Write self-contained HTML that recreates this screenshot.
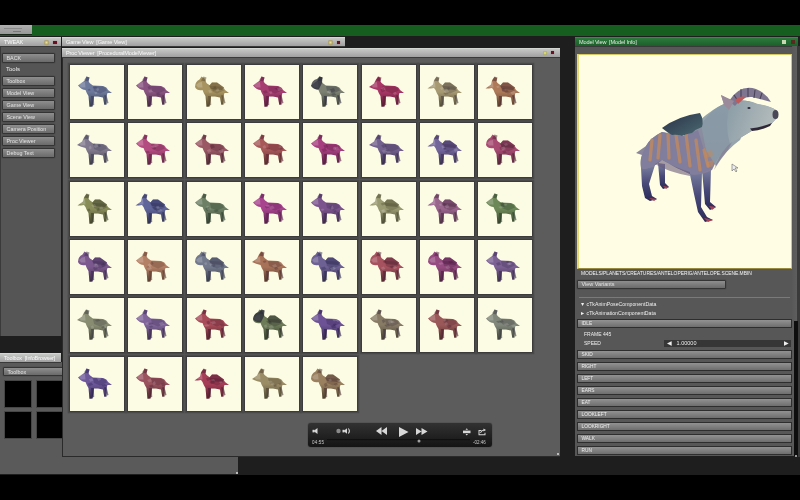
<!DOCTYPE html><html><head><meta charset="utf-8"><style>
*{margin:0;padding:0;box-sizing:border-box}
body{width:800px;height:500px;background:#000;position:relative;overflow:hidden;font-family:"Liberation Sans",sans-serif}
.tb,.btn,.ab,.t{will-change:transform}
.a{position:absolute}
.tb{position:absolute;height:10px;background:linear-gradient(#c6c8c6,#a0a0a0);border-top:1px solid #d4d6d4;border-bottom:1px solid #3a3a3a;color:#fafafa;font-size:5.6px;line-height:8.5px;padding-left:4px;white-space:nowrap;overflow:hidden;letter-spacing:-0.15px}
.btn{position:absolute;background:linear-gradient(#8e8e8e,#6a6a6a);border:1px solid #343434;border-radius:1px;color:#e4e4e4;font-size:5.4px;line-height:8.6px;padding-left:3.5px;white-space:nowrap;overflow:hidden;box-shadow:0 0 1px #222}
.cell{position:absolute;width:54px;height:54px;background:#fcfce4;box-shadow:0 0 0 0.8px #3a3a3a,0 0 0.5px 2.3px #4a4a4a}
.ab{position:absolute;left:577px;width:215px;height:9px;background:linear-gradient(#929292,#6e6e6e);border:1px solid #2e2e2e;color:#eee;font-size:4.8px;line-height:7px;padding-left:3.5px}
.t{position:absolute;color:#eee;font-size:5px;white-space:nowrap}
</style></head><body>

<svg width="0" height="0" style="position:absolute"><defs><linearGradient id="sh" gradientUnits="userSpaceOnUse" x1="0" y1="27" x2="0" y2="41"><stop offset="0" stop-color="#000" stop-opacity="0"/><stop offset="1" stop-color="#000" stop-opacity="0.5"/></linearGradient><path id="bA" d="M8,20.5 L12,17.5 L15,15.5 L16.5,11.5 L19.5,12.5 L18.5,16 Q19,18 23,20.5 L33,21 Q37,22 38,25 L42,28 L37.5,28 L36.5,31 L36.5,39.5 L34.3,39.8 L33,32.5 L28,31.5 L24,31.5 L22.5,41.5 L19.5,41.8 L18.5,31 Q16.5,28 15.5,25 Q12,25 8,20.5 Z"/><path id="bB" d="M7.5,23.5 L13,19.5 L14,15.5 L16.5,12 L19,13 L18.5,16.5 Q19,18 23,20.5 L33,21 Q37,22 38,25 L42,28 L37.5,28 L36.5,31 L36.5,39.5 L34.3,39.8 L33,32.5 L28,31.5 L24,31.5 L22.5,41.5 L19.5,41.8 L18.5,31 Q16.5,28 15.5,25 L14,23 Q11,23.5 7.5,23.5 Z"/><path id="bB2" d="M7,22 L12,18.5 L14,14.5 L16,11.5 L18.5,13 L18.5,16.5 Q19,18 23,20.5 L33,21 Q37,22 38,25 L42,28 L37.5,28 L36.5,31 L36.5,39.5 L34.3,39.8 L33,32.5 L28,31.5 L24,31.5 L22.5,41.5 L19.5,41.8 L18.5,31 Q16.5,28 15.5,25 Q11,24 7,22 Z"/><path id="bC" d="M8,22 Q8,16.5 12.5,14.5 L14.5,11.5 L17.5,13.5 L19,17 Q19,18 23,20.5 L33,21 Q37,22 38,25 L42,28 L37.5,28 L36.5,31 L36.5,39.5 L34.3,39.8 L33,32.5 L28,31.5 L24,31.5 L22.5,41.5 L19.5,41.8 L18.5,31 Q16.5,28 15.5,25 Q10,26 8,22 Z"/><path id="L" d="M21,31 L22,40.5 L24.2,40 L23.8,31Z M34,30.5 L37,38.5 L38.5,38 L36.5,30Z"/></defs></svg>
<div class="a" style="left:0;top:25px;width:800px;height:11px;background:#165e20"></div>
<div class="a" style="left:0;top:25px;width:32px;height:10px;background:linear-gradient(#b0b0b0,#989898);border-bottom:1px solid #1a2a1a"></div>
<div class="a" style="left:4px;top:27.5px;width:18px;height:0.8px;background:#8a8a8a"></div><div class="a" style="left:13px;top:30.5px;width:8px;height:0.8px;background:#7a7a7a"></div>
<div class="a" style="left:0;top:36px;width:800px;height:439px;background:#1e1e1e"></div>
<div class="a" style="left:0;top:46px;width:61px;height:290px;background:#555;border-left:1px solid #3a3a3a"></div>
<div class="tb" style="left:0;top:37px;width:61px">TWEAK</div>
<div class="a" style="left:44px;top:40px;width:4.5px;height:4.5px;border-radius:50%;background:radial-gradient(#e8e0a0,#8a7a40)"></div>
<div class="a" style="left:53px;top:40.5px;width:3.5px;height:3.5px;background:#6a1020;box-shadow:0 0 1px #a04050"></div>
<div class="btn" style="left:2px;top:53px;width:53px;height:10px">BACK</div>
<div class="t" style="left:6px;top:66px;font-size:6px">Tools</div>
<div class="btn" style="left:2px;top:76px;width:53px;height:10px">Toolbox</div>
<div class="btn" style="left:2px;top:88px;width:53px;height:10px">Model View</div>
<div class="btn" style="left:2px;top:100px;width:53px;height:10px">Game View</div>
<div class="btn" style="left:2px;top:112px;width:53px;height:10px">Scene View</div>
<div class="btn" style="left:2px;top:124px;width:53px;height:10px">Camera Position</div>
<div class="btn" style="left:2px;top:136px;width:53px;height:10px">Proc Viewer</div>
<div class="btn" style="left:2px;top:148px;width:53px;height:10px">Debug Text</div>
<div class="a" style="left:0;top:362px;width:238px;height:112px;background:#5a5a5a"></div>
<div class="tb" style="left:0;top:353px;width:61px;font-size:5.5px">Toolbox&nbsp; [InfoBrowser]</div>
<div class="btn" style="left:3px;top:367px;width:60px;height:9px">Toolbox</div>
<div class="a" style="left:3.5px;top:379.5px;width:28px;height:28px;background:#000;border:1px solid #464646"></div>
<div class="a" style="left:35.5px;top:379.5px;width:28px;height:28px;background:#000;border:1px solid #464646"></div>
<div class="a" style="left:3.5px;top:411px;width:28px;height:28px;background:#000;border:1px solid #464646"></div>
<div class="a" style="left:35.5px;top:411px;width:28px;height:28px;background:#000;border:1px solid #464646"></div>
<div class="tb" style="left:62px;top:37px;width:283px">Game View&nbsp; [Game View]</div>
<div class="a" style="left:328px;top:40px;width:4.5px;height:4.5px;border-radius:50%;background:radial-gradient(#e8e0a0,#8a7a40)"></div>
<div class="a" style="left:336.5px;top:40.5px;width:3.5px;height:3.5px;background:#6a1020;box-shadow:0 0 1px #a04050"></div>
<div class="a" style="left:62px;top:57px;width:498px;height:400px;background:#5c5c5c;border-left:1px solid #2a2a2a;border-bottom:1px solid #2a2a2a"></div>
<div class="tb" style="left:62px;top:48px;width:498px">Proc Viewer&nbsp; [ProceduralModelViewer]</div>
<div class="a" style="left:542.5px;top:50.5px;width:4.5px;height:4.5px;border-radius:50%;background:radial-gradient(#f0f090,#8a8a30)"></div>
<div class="a" style="left:550.5px;top:50.5px;width:3.5px;height:3.5px;background:#6a1020;box-shadow:0 0 1px #a04050"></div>
<div class="cell" style="left:70.0px;top:65.0px"><svg width="54" height="54" viewBox="0 0 54 54"><use href="#bA" fill="#6d799a"/><use href="#bA" fill="url(#sh)"/><path d="M23,21 L33,21.5 Q36,22.5 37,25.5 L30,28.5 L24,26Z" fill="#38385a" opacity="0.3"/><path d="M9,20 L12,17.5 L15,17 L15.5,22.5 L11,22.5Z" fill="#fff" opacity="0.2"/><path d="M14,15.5 L16.5,11.5 L19.5,12.5 L18.5,16.5Z" fill="#38385a" opacity="0.5"/><use href="#L" fill="#38385a" opacity="0.6"/><path d="M22.5,22.2 l3.3,-0.8 l1.7,1.6 l-3.3,0.8Z" fill="#38385a" opacity="0.35"/><path d="M26.1,23.9 l2.1,-1.1 l1.1,2.3 l-2.1,1.1Z" fill="#ffffff" opacity="0.15"/><path d="M17.6,24.5 l2.1,-0.8 l1.1,1.6 l-2.1,0.8Z" fill="#38385a" opacity="0.35"/><path d="M24.2,27.6 l2.2,-0.9 l1.1,1.8 l-2.2,0.9Z" fill="#ffffff" opacity="0.15"/></svg></div>
<div class="cell" style="left:128.3px;top:65.0px"><svg width="54" height="54" viewBox="0 0 54 54"><use href="#bA" fill="#885380"/><use href="#bA" fill="url(#sh)"/><path d="M23,21 L33,21.5 Q36,22.5 37,25.5 L30,28.5 L24,26Z" fill="#4a2a50" opacity="0.3"/><path d="M9,20 L12,17.5 L15,17 L15.5,22.5 L11,22.5Z" fill="#fff" opacity="0.2"/><path d="M14,15.5 L16.5,11.5 L19.5,12.5 L18.5,16.5Z" fill="#4a2a50" opacity="0.5"/><use href="#L" fill="#4a2a50" opacity="0.6"/><path d="M27.7,28.6 l3.2,-1.0 l1.6,2.1 l-3.2,1.0Z" fill="#4a2a50" opacity="0.35"/><path d="M33.6,21.4 l3.7,-1.0 l1.9,1.9 l-3.7,1.0Z" fill="#ffffff" opacity="0.15"/><path d="M19.5,21.9 l2.6,-1.4 l1.3,2.7 l-2.6,1.4Z" fill="#4a2a50" opacity="0.35"/><path d="M20.1,25.7 l3.3,-1.0 l1.6,2.1 l-3.3,1.0Z" fill="#ffffff" opacity="0.15"/></svg></div>
<div class="cell" style="left:186.6px;top:65.0px"><svg width="54" height="54" viewBox="0 0 54 54"><use href="#bC" fill="#a7935f"/><use href="#bC" fill="url(#sh)"/><path d="M22,21 L25,17.5 L30,17.5 L37,22.5 L35,25 L24,24Z" fill="#a7935f"/><path d="M22,21 L25,17.5 L30,17.5 L37,22.5 L35,25 L24,24Z" fill="#5a4a30" opacity="0.45"/><path d="M23,21 L33,21.5 Q36,22.5 37,25.5 L30,28.5 L24,26Z" fill="#5a4a30" opacity="0.3"/><path d="M9,20 L12,17.5 L15,17 L15.5,22.5 L11,22.5Z" fill="#fff" opacity="0.2"/><path d="M14,15.5 L16.5,11.5 L19.5,12.5 L18.5,16.5Z" fill="#5a4a30" opacity="0.5"/><use href="#L" fill="#5a4a30" opacity="0.6"/><path d="M26.3,21.5 l2.1,-0.9 l1.1,1.8 l-2.1,0.9Z" fill="#5a4a30" opacity="0.35"/><path d="M28.6,24.4 l2.6,-1.2 l1.3,2.4 l-2.6,1.2Z" fill="#ffffff" opacity="0.15"/><path d="M24.7,23.4 l3.6,-1.3 l1.8,2.5 l-3.6,1.3Z" fill="#5a4a30" opacity="0.35"/><path d="M21.1,25.6 l3.1,-1.4 l1.5,2.8 l-3.1,1.4Z" fill="#ffffff" opacity="0.15"/></svg></div>
<div class="cell" style="left:244.9px;top:65.0px"><svg width="54" height="54" viewBox="0 0 54 54"><use href="#bA" fill="#a73e72"/><use href="#bA" fill="url(#sh)"/><path d="M23,21 L33,21.5 Q36,22.5 37,25.5 L30,28.5 L24,26Z" fill="#5a1a40" opacity="0.3"/><path d="M9,20 L12,17.5 L15,17 L15.5,22.5 L11,22.5Z" fill="#fff" opacity="0.2"/><path d="M14,15.5 L16.5,11.5 L19.5,12.5 L18.5,16.5Z" fill="#5a1a40" opacity="0.5"/><use href="#L" fill="#5a1a40" opacity="0.6"/><path d="M29.4,23.3 l4.0,-0.8 l2.0,1.7 l-4.0,0.8Z" fill="#5a1a40" opacity="0.35"/><path d="M24.1,27.1 l2.3,-1.1 l1.2,2.2 l-2.3,1.1Z" fill="#ffffff" opacity="0.15"/><path d="M17.7,26.3 l3.5,-1.2 l1.8,2.4 l-3.5,1.2Z" fill="#5a1a40" opacity="0.35"/><path d="M31.9,23.5 l3.4,-1.2 l1.7,2.4 l-3.4,1.2Z" fill="#ffffff" opacity="0.15"/></svg></div>
<div class="cell" style="left:303.2px;top:65.0px"><svg width="54" height="54" viewBox="0 0 54 54"><use href="#bA" fill="#7b8072"/><use href="#bA" fill="url(#sh)"/><path d="M23,21 L33,21.5 Q36,22.5 37,25.5 L30,28.5 L24,26Z" fill="#2a2a3a" opacity="0.3"/><path d="M9,20 L12,17.5 L15,17 L15.5,22.5 L11,22.5Z" fill="#fff" opacity="0.2"/><path d="M14,15.5 L16.5,11.5 L19.5,12.5 L18.5,16.5Z" fill="#2a2a3a" opacity="0.5"/><use href="#L" fill="#2a2a3a" opacity="0.6"/><path d="M26.9,24.6 l3.7,-1.5 l1.8,2.9 l-3.7,1.5Z" fill="#2a2a3a" opacity="0.35"/><path d="M25.1,26.3 l2.1,-1.3 l1.1,2.6 l-2.1,1.3Z" fill="#ffffff" opacity="0.15"/><path d="M28.0,28.9 l3.6,-1.0 l1.8,1.9 l-3.6,1.0Z" fill="#2a2a3a" opacity="0.35"/><path d="M23.6,26.3 l2.0,-1.1 l1.0,2.2 l-2.0,1.1Z" fill="#ffffff" opacity="0.15"/><path d="M8,21 Q9,15 14,14 L16.5,11.5 L19.5,12.5 L19,18 L16,24 Q11,25 8,21Z" fill="#2a2a38" opacity="0.75"/></svg></div>
<div class="cell" style="left:361.5px;top:65.0px"><svg width="54" height="54" viewBox="0 0 54 54"><use href="#bB2" fill="#a73765"/><use href="#bB2" fill="url(#sh)"/><path d="M23,21 L33,21.5 Q36,22.5 37,25.5 L30,28.5 L24,26Z" fill="#5a1a30" opacity="0.3"/><path d="M9,20 L12,17.5 L15,17 L15.5,22.5 L11,22.5Z" fill="#fff" opacity="0.2"/><path d="M14,15.5 L16.5,11.5 L19.5,12.5 L18.5,16.5Z" fill="#5a1a30" opacity="0.5"/><use href="#L" fill="#5a1a30" opacity="0.6"/><path d="M19.9,21.9 l2.1,-1.3 l1.1,2.7 l-2.1,1.3Z" fill="#5a1a30" opacity="0.35"/><path d="M19.2,23.0 l2.8,-1.4 l1.4,2.8 l-2.8,1.4Z" fill="#ffffff" opacity="0.15"/><path d="M18.4,24.6 l3.1,-1.4 l1.5,2.8 l-3.1,1.4Z" fill="#5a1a30" opacity="0.35"/><path d="M30.9,27.9 l2.6,-1.1 l1.3,2.1 l-2.6,1.1Z" fill="#ffffff" opacity="0.15"/></svg></div>
<div class="cell" style="left:419.8px;top:65.0px"><svg width="54" height="54" viewBox="0 0 54 54"><use href="#bB" fill="#a79a72"/><use href="#bB" fill="url(#sh)"/><path d="M22,21 L25,17.5 L30,17.5 L37,22.5 L35,25 L24,24Z" fill="#a79a72"/><path d="M22,21 L25,17.5 L30,17.5 L37,22.5 L35,25 L24,24Z" fill="#4a4040" opacity="0.45"/><path d="M23,21 L33,21.5 Q36,22.5 37,25.5 L30,28.5 L24,26Z" fill="#4a4040" opacity="0.3"/><path d="M9,20 L12,17.5 L15,17 L15.5,22.5 L11,22.5Z" fill="#fff" opacity="0.2"/><path d="M14,15.5 L16.5,11.5 L19.5,12.5 L18.5,16.5Z" fill="#4a4040" opacity="0.5"/><use href="#L" fill="#4a4040" opacity="0.6"/><path d="M23.1,28.1 l3.9,-0.9 l2.0,1.7 l-3.9,0.9Z" fill="#4a4040" opacity="0.35"/><path d="M20.0,22.9 l2.5,-1.1 l1.2,2.2 l-2.5,1.1Z" fill="#ffffff" opacity="0.15"/><path d="M27.0,23.1 l2.0,-1.1 l1.0,2.1 l-2.0,1.1Z" fill="#4a4040" opacity="0.35"/><path d="M23.3,25.5 l3.9,-1.3 l2.0,2.5 l-3.9,1.3Z" fill="#ffffff" opacity="0.15"/></svg></div>
<div class="cell" style="left:478.1px;top:65.0px"><svg width="54" height="54" viewBox="0 0 54 54"><use href="#bB" fill="#ad7958"/><use href="#bB" fill="url(#sh)"/><path d="M22,21 L25,17.5 L30,17.5 L37,22.5 L35,25 L24,24Z" fill="#ad7958"/><path d="M22,21 L25,17.5 L30,17.5 L37,22.5 L35,25 L24,24Z" fill="#4a2a30" opacity="0.45"/><path d="M23,21 L33,21.5 Q36,22.5 37,25.5 L30,28.5 L24,26Z" fill="#4a2a30" opacity="0.3"/><path d="M9,20 L12,17.5 L15,17 L15.5,22.5 L11,22.5Z" fill="#fff" opacity="0.2"/><path d="M14,15.5 L16.5,11.5 L19.5,12.5 L18.5,16.5Z" fill="#4a2a30" opacity="0.5"/><use href="#L" fill="#4a2a30" opacity="0.6"/><path d="M25.8,25.9 l3.4,-0.8 l1.7,1.6 l-3.4,0.8Z" fill="#4a2a30" opacity="0.35"/><path d="M32.3,27.2 l3.7,-1.3 l1.9,2.7 l-3.7,1.3Z" fill="#ffffff" opacity="0.15"/><path d="M23.7,24.2 l2.2,-1.2 l1.1,2.5 l-2.2,1.2Z" fill="#4a2a30" opacity="0.35"/><path d="M18.1,21.5 l2.4,-0.9 l1.2,1.7 l-2.4,0.9Z" fill="#ffffff" opacity="0.15"/></svg></div>
<div class="cell" style="left:70.0px;top:123.3px"><svg width="54" height="54" viewBox="0 0 54 54"><use href="#bB2" fill="#80798d"/><use href="#bB2" fill="url(#sh)"/><path d="M23,21 L33,21.5 Q36,22.5 37,25.5 L30,28.5 L24,26Z" fill="#3a3a50" opacity="0.3"/><path d="M9,20 L12,17.5 L15,17 L15.5,22.5 L11,22.5Z" fill="#fff" opacity="0.2"/><path d="M14,15.5 L16.5,11.5 L19.5,12.5 L18.5,16.5Z" fill="#3a3a50" opacity="0.5"/><use href="#L" fill="#3a3a50" opacity="0.6"/><path d="M22.8,21.4 l2.0,-0.9 l1.0,1.7 l-2.0,0.9Z" fill="#3a3a50" opacity="0.35"/><path d="M18.7,23.9 l2.1,-1.4 l1.0,2.8 l-2.1,1.4Z" fill="#ffffff" opacity="0.15"/><path d="M27.4,22.2 l2.5,-1.0 l1.3,2.0 l-2.5,1.0Z" fill="#3a3a50" opacity="0.35"/><path d="M23.2,22.0 l3.7,-1.5 l1.8,3.0 l-3.7,1.5Z" fill="#ffffff" opacity="0.15"/></svg></div>
<div class="cell" style="left:128.3px;top:123.3px"><svg width="54" height="54" viewBox="0 0 54 54"><use href="#bA" fill="#b44b80"/><use href="#bA" fill="url(#sh)"/><path d="M23,21 L33,21.5 Q36,22.5 37,25.5 L30,28.5 L24,26Z" fill="#5a2040" opacity="0.3"/><path d="M9,20 L12,17.5 L15,17 L15.5,22.5 L11,22.5Z" fill="#fff" opacity="0.2"/><path d="M14,15.5 L16.5,11.5 L19.5,12.5 L18.5,16.5Z" fill="#5a2040" opacity="0.5"/><use href="#L" fill="#5a2040" opacity="0.6"/><path d="M24.9,24.9 l2.2,-0.8 l1.1,1.7 l-2.2,0.8Z" fill="#5a2040" opacity="0.35"/><path d="M22.8,23.1 l3.7,-0.9 l1.8,1.7 l-3.7,0.9Z" fill="#ffffff" opacity="0.15"/><path d="M17.4,28.6 l3.1,-0.9 l1.5,1.7 l-3.1,0.9Z" fill="#5a2040" opacity="0.35"/><path d="M26.2,21.2 l3.1,-1.5 l1.5,3.0 l-3.1,1.5Z" fill="#ffffff" opacity="0.15"/></svg></div>
<div class="cell" style="left:186.6px;top:123.3px"><svg width="54" height="54" viewBox="0 0 54 54"><use href="#bA" fill="#9a5865"/><use href="#bA" fill="url(#sh)"/><path d="M23,21 L33,21.5 Q36,22.5 37,25.5 L30,28.5 L24,26Z" fill="#4a2030" opacity="0.3"/><path d="M9,20 L12,17.5 L15,17 L15.5,22.5 L11,22.5Z" fill="#fff" opacity="0.2"/><path d="M14,15.5 L16.5,11.5 L19.5,12.5 L18.5,16.5Z" fill="#4a2030" opacity="0.5"/><use href="#L" fill="#4a2030" opacity="0.6"/><path d="M31.7,26.6 l2.5,-1.0 l1.3,2.1 l-2.5,1.0Z" fill="#4a2030" opacity="0.35"/><path d="M19.8,27.2 l3.1,-1.3 l1.5,2.7 l-3.1,1.3Z" fill="#ffffff" opacity="0.15"/><path d="M22.6,22.8 l3.6,-1.5 l1.8,3.0 l-3.6,1.5Z" fill="#4a2030" opacity="0.35"/><path d="M31.5,27.4 l3.6,-1.3 l1.8,2.6 l-3.6,1.3Z" fill="#ffffff" opacity="0.15"/></svg></div>
<div class="cell" style="left:244.9px;top:123.3px"><svg width="54" height="54" viewBox="0 0 54 54"><use href="#bA" fill="#a75858"/><use href="#bA" fill="url(#sh)"/><path d="M23,21 L33,21.5 Q36,22.5 37,25.5 L30,28.5 L24,26Z" fill="#5a2030" opacity="0.3"/><path d="M9,20 L12,17.5 L15,17 L15.5,22.5 L11,22.5Z" fill="#fff" opacity="0.2"/><path d="M14,15.5 L16.5,11.5 L19.5,12.5 L18.5,16.5Z" fill="#5a2030" opacity="0.5"/><use href="#L" fill="#5a2030" opacity="0.6"/><path d="M20.9,25.1 l2.7,-0.8 l1.4,1.5 l-2.7,0.8Z" fill="#5a2030" opacity="0.35"/><path d="M17.5,23.2 l2.5,-1.3 l1.3,2.5 l-2.5,1.3Z" fill="#ffffff" opacity="0.15"/><path d="M33.3,24.6 l3.9,-1.5 l1.9,3.0 l-3.9,1.5Z" fill="#5a2030" opacity="0.35"/><path d="M33.2,23.9 l2.4,-0.9 l1.2,1.8 l-2.4,0.9Z" fill="#ffffff" opacity="0.15"/></svg></div>
<div class="cell" style="left:303.2px;top:123.3px"><svg width="54" height="54" viewBox="0 0 54 54"><use href="#bA" fill="#a73e80"/><use href="#bA" fill="url(#sh)"/><path d="M23,21 L33,21.5 Q36,22.5 37,25.5 L30,28.5 L24,26Z" fill="#5a1a40" opacity="0.3"/><path d="M9,20 L12,17.5 L15,17 L15.5,22.5 L11,22.5Z" fill="#fff" opacity="0.2"/><path d="M14,15.5 L16.5,11.5 L19.5,12.5 L18.5,16.5Z" fill="#5a1a40" opacity="0.5"/><use href="#L" fill="#5a1a40" opacity="0.6"/><path d="M20.3,22.6 l3.2,-1.4 l1.6,2.9 l-3.2,1.4Z" fill="#5a1a40" opacity="0.35"/><path d="M31.3,24.8 l3.3,-1.3 l1.7,2.7 l-3.3,1.3Z" fill="#ffffff" opacity="0.15"/><path d="M18.4,26.3 l3.8,-1.3 l1.9,2.7 l-3.8,1.3Z" fill="#5a1a40" opacity="0.35"/><path d="M29.8,24.8 l2.4,-1.3 l1.2,2.7 l-2.4,1.3Z" fill="#ffffff" opacity="0.15"/></svg></div>
<div class="cell" style="left:361.5px;top:123.3px"><svg width="54" height="54" viewBox="0 0 54 54"><use href="#bB2" fill="#72608d"/><use href="#bB2" fill="url(#sh)"/><path d="M23,21 L33,21.5 Q36,22.5 37,25.5 L30,28.5 L24,26Z" fill="#3a2a50" opacity="0.3"/><path d="M9,20 L12,17.5 L15,17 L15.5,22.5 L11,22.5Z" fill="#fff" opacity="0.2"/><path d="M14,15.5 L16.5,11.5 L19.5,12.5 L18.5,16.5Z" fill="#3a2a50" opacity="0.5"/><use href="#L" fill="#3a2a50" opacity="0.6"/><path d="M22.7,27.4 l3.9,-1.0 l2.0,2.1 l-3.9,1.0Z" fill="#3a2a50" opacity="0.35"/><path d="M23.8,28.6 l3.4,-0.9 l1.7,1.8 l-3.4,0.9Z" fill="#ffffff" opacity="0.15"/><path d="M19.2,22.2 l3.8,-1.4 l1.9,2.7 l-3.8,1.4Z" fill="#3a2a50" opacity="0.35"/><path d="M19.5,27.6 l4.0,-1.2 l2.0,2.5 l-4.0,1.2Z" fill="#ffffff" opacity="0.15"/></svg></div>
<div class="cell" style="left:419.8px;top:123.3px"><svg width="54" height="54" viewBox="0 0 54 54"><use href="#bB" fill="#72659a"/><use href="#bB" fill="url(#sh)"/><path d="M22,21 L25,17.5 L30,17.5 L37,22.5 L35,25 L24,24Z" fill="#72659a"/><path d="M22,21 L25,17.5 L30,17.5 L37,22.5 L35,25 L24,24Z" fill="#3a2a50" opacity="0.45"/><path d="M23,21 L33,21.5 Q36,22.5 37,25.5 L30,28.5 L24,26Z" fill="#3a2a50" opacity="0.3"/><path d="M9,20 L12,17.5 L15,17 L15.5,22.5 L11,22.5Z" fill="#fff" opacity="0.2"/><path d="M14,15.5 L16.5,11.5 L19.5,12.5 L18.5,16.5Z" fill="#3a2a50" opacity="0.5"/><use href="#L" fill="#3a2a50" opacity="0.6"/><path d="M23.0,25.4 l2.3,-0.8 l1.1,1.5 l-2.3,0.8Z" fill="#3a2a50" opacity="0.35"/><path d="M33.5,26.2 l3.1,-1.5 l1.5,2.9 l-3.1,1.5Z" fill="#ffffff" opacity="0.15"/><path d="M24.4,28.0 l3.7,-0.9 l1.8,1.8 l-3.7,0.9Z" fill="#3a2a50" opacity="0.35"/><path d="M21.3,23.3 l2.5,-1.2 l1.2,2.4 l-2.5,1.2Z" fill="#ffffff" opacity="0.15"/></svg></div>
<div class="cell" style="left:478.1px;top:123.3px"><svg width="54" height="54" viewBox="0 0 54 54"><use href="#bC" fill="#a74b72"/><use href="#bC" fill="url(#sh)"/><path d="M22,21 L25,17.5 L30,17.5 L37,22.5 L35,25 L24,24Z" fill="#a74b72"/><path d="M22,21 L25,17.5 L30,17.5 L37,22.5 L35,25 L24,24Z" fill="#4a2030" opacity="0.45"/><path d="M23,21 L33,21.5 Q36,22.5 37,25.5 L30,28.5 L24,26Z" fill="#4a2030" opacity="0.3"/><path d="M9,20 L12,17.5 L15,17 L15.5,22.5 L11,22.5Z" fill="#fff" opacity="0.2"/><path d="M14,15.5 L16.5,11.5 L19.5,12.5 L18.5,16.5Z" fill="#4a2030" opacity="0.5"/><use href="#L" fill="#4a2030" opacity="0.6"/><path d="M21.4,24.4 l2.3,-1.4 l1.1,2.9 l-2.3,1.4Z" fill="#4a2030" opacity="0.35"/><path d="M23.0,24.7 l3.2,-1.4 l1.6,2.9 l-3.2,1.4Z" fill="#ffffff" opacity="0.15"/><path d="M24.2,28.3 l3.0,-1.1 l1.5,2.3 l-3.0,1.1Z" fill="#4a2030" opacity="0.35"/><path d="M25.9,21.1 l2.9,-0.9 l1.4,1.8 l-2.9,0.9Z" fill="#ffffff" opacity="0.15"/></svg></div>
<div class="cell" style="left:70.0px;top:181.6px"><svg width="54" height="54" viewBox="0 0 54 54"><use href="#bB" fill="#888d58"/><use href="#bB" fill="url(#sh)"/><path d="M22,21 L25,17.5 L30,17.5 L37,22.5 L35,25 L24,24Z" fill="#888d58"/><path d="M22,21 L25,17.5 L30,17.5 L37,22.5 L35,25 L24,24Z" fill="#3a3a2a" opacity="0.45"/><path d="M23,21 L33,21.5 Q36,22.5 37,25.5 L30,28.5 L24,26Z" fill="#3a3a2a" opacity="0.3"/><path d="M9,20 L12,17.5 L15,17 L15.5,22.5 L11,22.5Z" fill="#fff" opacity="0.2"/><path d="M14,15.5 L16.5,11.5 L19.5,12.5 L18.5,16.5Z" fill="#3a3a2a" opacity="0.5"/><use href="#L" fill="#3a3a2a" opacity="0.6"/><path d="M17.1,27.4 l2.3,-1.1 l1.2,2.2 l-2.3,1.1Z" fill="#3a3a2a" opacity="0.35"/><path d="M29.3,25.5 l2.7,-1.1 l1.3,2.3 l-2.7,1.1Z" fill="#ffffff" opacity="0.15"/><path d="M26.4,27.3 l2.2,-1.2 l1.1,2.3 l-2.2,1.2Z" fill="#3a3a2a" opacity="0.35"/><path d="M21.2,23.2 l3.5,-1.1 l1.8,2.3 l-3.5,1.1Z" fill="#ffffff" opacity="0.15"/></svg></div>
<div class="cell" style="left:128.3px;top:181.6px"><svg width="54" height="54" viewBox="0 0 54 54"><use href="#bB" fill="#60659a"/><use href="#bB" fill="url(#sh)"/><path d="M22,21 L25,17.5 L30,17.5 L37,22.5 L35,25 L24,24Z" fill="#60659a"/><path d="M22,21 L25,17.5 L30,17.5 L37,22.5 L35,25 L24,24Z" fill="#2a2a50" opacity="0.45"/><path d="M23,21 L33,21.5 Q36,22.5 37,25.5 L30,28.5 L24,26Z" fill="#2a2a50" opacity="0.3"/><path d="M9,20 L12,17.5 L15,17 L15.5,22.5 L11,22.5Z" fill="#fff" opacity="0.2"/><path d="M14,15.5 L16.5,11.5 L19.5,12.5 L18.5,16.5Z" fill="#2a2a50" opacity="0.5"/><use href="#L" fill="#2a2a50" opacity="0.6"/><path d="M26.5,27.1 l3.8,-1.1 l1.9,2.2 l-3.8,1.1Z" fill="#2a2a50" opacity="0.35"/><path d="M27.4,25.0 l3.0,-1.3 l1.5,2.5 l-3.0,1.3Z" fill="#ffffff" opacity="0.15"/><path d="M24.7,25.3 l3.0,-1.5 l1.5,2.9 l-3.0,1.5Z" fill="#2a2a50" opacity="0.35"/><path d="M28.9,28.0 l3.9,-0.9 l1.9,1.9 l-3.9,0.9Z" fill="#ffffff" opacity="0.15"/></svg></div>
<div class="cell" style="left:186.6px;top:181.6px"><svg width="54" height="54" viewBox="0 0 54 54"><use href="#bA" fill="#6d8065"/><use href="#bA" fill="url(#sh)"/><path d="M23,21 L33,21.5 Q36,22.5 37,25.5 L30,28.5 L24,26Z" fill="#2a3a2a" opacity="0.3"/><path d="M9,20 L12,17.5 L15,17 L15.5,22.5 L11,22.5Z" fill="#fff" opacity="0.2"/><path d="M14,15.5 L16.5,11.5 L19.5,12.5 L18.5,16.5Z" fill="#2a3a2a" opacity="0.5"/><use href="#L" fill="#2a3a2a" opacity="0.6"/><path d="M26.5,28.5 l3.7,-0.9 l1.8,1.7 l-3.7,0.9Z" fill="#2a3a2a" opacity="0.35"/><path d="M19.1,24.5 l2.1,-0.9 l1.1,1.9 l-2.1,0.9Z" fill="#ffffff" opacity="0.15"/><path d="M18.2,26.4 l3.6,-1.4 l1.8,2.8 l-3.6,1.4Z" fill="#2a3a2a" opacity="0.35"/><path d="M19.6,26.7 l3.3,-0.9 l1.7,1.7 l-3.3,0.9Z" fill="#ffffff" opacity="0.15"/></svg></div>
<div class="cell" style="left:244.9px;top:181.6px"><svg width="54" height="54" viewBox="0 0 54 54"><use href="#bA" fill="#a7448d"/><use href="#bA" fill="url(#sh)"/><path d="M23,21 L33,21.5 Q36,22.5 37,25.5 L30,28.5 L24,26Z" fill="#5a1a50" opacity="0.3"/><path d="M9,20 L12,17.5 L15,17 L15.5,22.5 L11,22.5Z" fill="#fff" opacity="0.2"/><path d="M14,15.5 L16.5,11.5 L19.5,12.5 L18.5,16.5Z" fill="#5a1a50" opacity="0.5"/><use href="#L" fill="#5a1a50" opacity="0.6"/><path d="M32.0,28.7 l2.4,-1.5 l1.2,2.9 l-2.4,1.5Z" fill="#5a1a50" opacity="0.35"/><path d="M23.8,24.9 l4.0,-1.4 l2.0,2.7 l-4.0,1.4Z" fill="#ffffff" opacity="0.15"/><path d="M19.7,24.5 l3.0,-1.0 l1.5,2.0 l-3.0,1.0Z" fill="#5a1a50" opacity="0.35"/><path d="M20.3,23.5 l3.4,-0.8 l1.7,1.5 l-3.4,0.8Z" fill="#ffffff" opacity="0.15"/></svg></div>
<div class="cell" style="left:303.2px;top:181.6px"><svg width="54" height="54" viewBox="0 0 54 54"><use href="#bA" fill="#7b538d"/><use href="#bA" fill="url(#sh)"/><path d="M23,21 L33,21.5 Q36,22.5 37,25.5 L30,28.5 L24,26Z" fill="#3a2a50" opacity="0.3"/><path d="M9,20 L12,17.5 L15,17 L15.5,22.5 L11,22.5Z" fill="#fff" opacity="0.2"/><path d="M14,15.5 L16.5,11.5 L19.5,12.5 L18.5,16.5Z" fill="#3a2a50" opacity="0.5"/><use href="#L" fill="#3a2a50" opacity="0.6"/><path d="M26.4,24.5 l2.0,-1.0 l1.0,2.0 l-2.0,1.0Z" fill="#3a2a50" opacity="0.35"/><path d="M27.6,25.1 l2.1,-1.5 l1.1,3.0 l-2.1,1.5Z" fill="#ffffff" opacity="0.15"/><path d="M30.4,28.8 l2.2,-0.9 l1.1,1.9 l-2.2,0.9Z" fill="#3a2a50" opacity="0.35"/><path d="M17.7,27.2 l2.5,-0.8 l1.3,1.7 l-2.5,0.8Z" fill="#ffffff" opacity="0.15"/></svg></div>
<div class="cell" style="left:361.5px;top:181.6px"><svg width="54" height="54" viewBox="0 0 54 54"><use href="#bB" fill="#9a9a72"/><use href="#bB" fill="url(#sh)"/><path d="M22,21 L25,17.5 L30,17.5 L37,22.5 L35,25 L24,24Z" fill="#9a9a72"/><path d="M22,21 L25,17.5 L30,17.5 L37,22.5 L35,25 L24,24Z" fill="#4a4a30" opacity="0.45"/><path d="M23,21 L33,21.5 Q36,22.5 37,25.5 L30,28.5 L24,26Z" fill="#4a4a30" opacity="0.3"/><path d="M9,20 L12,17.5 L15,17 L15.5,22.5 L11,22.5Z" fill="#fff" opacity="0.2"/><path d="M14,15.5 L16.5,11.5 L19.5,12.5 L18.5,16.5Z" fill="#4a4a30" opacity="0.5"/><use href="#L" fill="#4a4a30" opacity="0.6"/><path d="M24.2,28.3 l3.6,-0.9 l1.8,1.9 l-3.6,0.9Z" fill="#4a4a30" opacity="0.35"/><path d="M19.5,28.4 l3.1,-1.3 l1.6,2.6 l-3.1,1.3Z" fill="#ffffff" opacity="0.15"/><path d="M18.5,21.5 l3.4,-1.1 l1.7,2.1 l-3.4,1.1Z" fill="#4a4a30" opacity="0.35"/><path d="M18.2,28.5 l3.3,-1.4 l1.6,2.7 l-3.3,1.4Z" fill="#ffffff" opacity="0.15"/></svg></div>
<div class="cell" style="left:419.8px;top:181.6px"><svg width="54" height="54" viewBox="0 0 54 54"><use href="#bB" fill="#9a658d"/><use href="#bB" fill="url(#sh)"/><path d="M22,21 L25,17.5 L30,17.5 L37,22.5 L35,25 L24,24Z" fill="#9a658d"/><path d="M22,21 L25,17.5 L30,17.5 L37,22.5 L35,25 L24,24Z" fill="#4a2a40" opacity="0.45"/><path d="M23,21 L33,21.5 Q36,22.5 37,25.5 L30,28.5 L24,26Z" fill="#4a2a40" opacity="0.3"/><path d="M9,20 L12,17.5 L15,17 L15.5,22.5 L11,22.5Z" fill="#fff" opacity="0.2"/><path d="M14,15.5 L16.5,11.5 L19.5,12.5 L18.5,16.5Z" fill="#4a2a40" opacity="0.5"/><use href="#L" fill="#4a2a40" opacity="0.6"/><path d="M18.4,27.8 l2.1,-1.4 l1.1,2.8 l-2.1,1.4Z" fill="#4a2a40" opacity="0.35"/><path d="M24.7,23.7 l3.1,-1.4 l1.6,2.9 l-3.1,1.4Z" fill="#ffffff" opacity="0.15"/><path d="M21.6,22.0 l3.1,-0.9 l1.5,1.9 l-3.1,0.9Z" fill="#4a2a40" opacity="0.35"/><path d="M18.9,22.3 l2.1,-0.9 l1.1,1.8 l-2.1,0.9Z" fill="#ffffff" opacity="0.15"/></svg></div>
<div class="cell" style="left:478.1px;top:181.6px"><svg width="54" height="54" viewBox="0 0 54 54"><use href="#bA" fill="#6d8858"/><use href="#bA" fill="url(#sh)"/><path d="M23,21 L33,21.5 Q36,22.5 37,25.5 L30,28.5 L24,26Z" fill="#2a3a2a" opacity="0.3"/><path d="M9,20 L12,17.5 L15,17 L15.5,22.5 L11,22.5Z" fill="#fff" opacity="0.2"/><path d="M14,15.5 L16.5,11.5 L19.5,12.5 L18.5,16.5Z" fill="#2a3a2a" opacity="0.5"/><use href="#L" fill="#2a3a2a" opacity="0.6"/><path d="M22.3,23.4 l3.5,-1.0 l1.8,1.9 l-3.5,1.0Z" fill="#2a3a2a" opacity="0.35"/><path d="M25.5,22.4 l2.7,-0.8 l1.3,1.5 l-2.7,0.8Z" fill="#ffffff" opacity="0.15"/><path d="M21.3,21.1 l3.5,-1.2 l1.7,2.3 l-3.5,1.2Z" fill="#2a3a2a" opacity="0.35"/><path d="M20.2,24.8 l3.9,-0.8 l1.9,1.7 l-3.9,0.8Z" fill="#ffffff" opacity="0.15"/></svg></div>
<div class="cell" style="left:70.0px;top:239.9px"><svg width="54" height="54" viewBox="0 0 54 54"><use href="#bC" fill="#7b588d"/><use href="#bC" fill="url(#sh)"/><path d="M22,21 L25,17.5 L30,17.5 L37,22.5 L35,25 L24,24Z" fill="#7b588d"/><path d="M22,21 L25,17.5 L30,17.5 L37,22.5 L35,25 L24,24Z" fill="#3a2a50" opacity="0.45"/><path d="M23,21 L33,21.5 Q36,22.5 37,25.5 L30,28.5 L24,26Z" fill="#3a2a50" opacity="0.3"/><path d="M9,20 L12,17.5 L15,17 L15.5,22.5 L11,22.5Z" fill="#fff" opacity="0.2"/><path d="M14,15.5 L16.5,11.5 L19.5,12.5 L18.5,16.5Z" fill="#3a2a50" opacity="0.5"/><use href="#L" fill="#3a2a50" opacity="0.6"/><path d="M30.9,24.5 l3.0,-1.4 l1.5,2.8 l-3.0,1.4Z" fill="#3a2a50" opacity="0.35"/><path d="M23.7,25.1 l3.4,-1.5 l1.7,3.0 l-3.4,1.5Z" fill="#ffffff" opacity="0.15"/><path d="M22.8,27.7 l3.4,-1.2 l1.7,2.5 l-3.4,1.2Z" fill="#3a2a50" opacity="0.35"/><path d="M23.9,23.8 l2.1,-0.8 l1.1,1.7 l-2.1,0.8Z" fill="#ffffff" opacity="0.15"/></svg></div>
<div class="cell" style="left:128.3px;top:239.9px"><svg width="54" height="54" viewBox="0 0 54 54"><use href="#bA" fill="#b48065"/><use href="#bA" fill="url(#sh)"/><path d="M23,21 L33,21.5 Q36,22.5 37,25.5 L30,28.5 L24,26Z" fill="#5a3a30" opacity="0.3"/><path d="M9,20 L12,17.5 L15,17 L15.5,22.5 L11,22.5Z" fill="#fff" opacity="0.2"/><path d="M14,15.5 L16.5,11.5 L19.5,12.5 L18.5,16.5Z" fill="#5a3a30" opacity="0.5"/><use href="#L" fill="#5a3a30" opacity="0.6"/><path d="M18.2,26.9 l2.5,-0.9 l1.3,1.7 l-2.5,0.9Z" fill="#5a3a30" opacity="0.35"/><path d="M18.4,27.7 l3.7,-1.3 l1.9,2.5 l-3.7,1.3Z" fill="#ffffff" opacity="0.15"/><path d="M21.8,22.9 l2.6,-1.1 l1.3,2.2 l-2.6,1.1Z" fill="#5a3a30" opacity="0.35"/><path d="M19.7,24.6 l2.5,-1.5 l1.3,2.9 l-2.5,1.5Z" fill="#ffffff" opacity="0.15"/></svg></div>
<div class="cell" style="left:186.6px;top:239.9px"><svg width="54" height="54" viewBox="0 0 54 54"><use href="#bC" fill="#72798d"/><use href="#bC" fill="url(#sh)"/><path d="M22,21 L25,17.5 L30,17.5 L37,22.5 L35,25 L24,24Z" fill="#72798d"/><path d="M22,21 L25,17.5 L30,17.5 L37,22.5 L35,25 L24,24Z" fill="#3a3a50" opacity="0.45"/><path d="M23,21 L33,21.5 Q36,22.5 37,25.5 L30,28.5 L24,26Z" fill="#3a3a50" opacity="0.3"/><path d="M9,20 L12,17.5 L15,17 L15.5,22.5 L11,22.5Z" fill="#fff" opacity="0.2"/><path d="M14,15.5 L16.5,11.5 L19.5,12.5 L18.5,16.5Z" fill="#3a3a50" opacity="0.5"/><use href="#L" fill="#3a3a50" opacity="0.6"/><path d="M33.5,25.4 l2.5,-1.5 l1.2,2.9 l-2.5,1.5Z" fill="#3a3a50" opacity="0.35"/><path d="M22.3,23.9 l2.0,-1.0 l1.0,2.1 l-2.0,1.0Z" fill="#ffffff" opacity="0.15"/><path d="M25.1,25.0 l2.4,-1.1 l1.2,2.3 l-2.4,1.1Z" fill="#3a3a50" opacity="0.35"/><path d="M17.1,23.1 l2.2,-1.0 l1.1,2.1 l-2.2,1.0Z" fill="#ffffff" opacity="0.15"/></svg></div>
<div class="cell" style="left:244.9px;top:239.9px"><svg width="54" height="54" viewBox="0 0 54 54"><use href="#bB2" fill="#a77258"/><use href="#bB2" fill="url(#sh)"/><path d="M23,21 L33,21.5 Q36,22.5 37,25.5 L30,28.5 L24,26Z" fill="#4a2a30" opacity="0.3"/><path d="M9,20 L12,17.5 L15,17 L15.5,22.5 L11,22.5Z" fill="#fff" opacity="0.2"/><path d="M14,15.5 L16.5,11.5 L19.5,12.5 L18.5,16.5Z" fill="#4a2a30" opacity="0.5"/><use href="#L" fill="#4a2a30" opacity="0.6"/><path d="M17.7,21.2 l2.6,-0.9 l1.3,1.8 l-2.6,0.9Z" fill="#4a2a30" opacity="0.35"/><path d="M27.0,25.2 l3.5,-1.2 l1.8,2.5 l-3.5,1.2Z" fill="#ffffff" opacity="0.15"/><path d="M29.2,28.0 l2.8,-1.0 l1.4,2.0 l-2.8,1.0Z" fill="#4a2a30" opacity="0.35"/><path d="M33.7,22.2 l3.4,-1.2 l1.7,2.5 l-3.4,1.2Z" fill="#ffffff" opacity="0.15"/></svg></div>
<div class="cell" style="left:303.2px;top:239.9px"><svg width="54" height="54" viewBox="0 0 54 54"><use href="#bC" fill="#6d6093"/><use href="#bC" fill="url(#sh)"/><path d="M22,21 L25,17.5 L30,17.5 L37,22.5 L35,25 L24,24Z" fill="#6d6093"/><path d="M22,21 L25,17.5 L30,17.5 L37,22.5 L35,25 L24,24Z" fill="#2a2a50" opacity="0.45"/><path d="M23,21 L33,21.5 Q36,22.5 37,25.5 L30,28.5 L24,26Z" fill="#2a2a50" opacity="0.3"/><path d="M9,20 L12,17.5 L15,17 L15.5,22.5 L11,22.5Z" fill="#fff" opacity="0.2"/><path d="M14,15.5 L16.5,11.5 L19.5,12.5 L18.5,16.5Z" fill="#2a2a50" opacity="0.5"/><use href="#L" fill="#2a2a50" opacity="0.6"/><path d="M17.7,27.7 l3.8,-1.2 l1.9,2.4 l-3.8,1.2Z" fill="#2a2a50" opacity="0.35"/><path d="M29.5,27.5 l2.3,-1.1 l1.1,2.3 l-2.3,1.1Z" fill="#ffffff" opacity="0.15"/><path d="M25.6,27.7 l3.6,-1.4 l1.8,2.7 l-3.6,1.4Z" fill="#2a2a50" opacity="0.35"/><path d="M26.9,28.1 l3.4,-1.3 l1.7,2.5 l-3.4,1.3Z" fill="#ffffff" opacity="0.15"/></svg></div>
<div class="cell" style="left:361.5px;top:239.9px"><svg width="54" height="54" viewBox="0 0 54 54"><use href="#bC" fill="#a7525f"/><use href="#bC" fill="url(#sh)"/><path d="M22,21 L25,17.5 L30,17.5 L37,22.5 L35,25 L24,24Z" fill="#a7525f"/><path d="M22,21 L25,17.5 L30,17.5 L37,22.5 L35,25 L24,24Z" fill="#4a2030" opacity="0.45"/><path d="M23,21 L33,21.5 Q36,22.5 37,25.5 L30,28.5 L24,26Z" fill="#4a2030" opacity="0.3"/><path d="M9,20 L12,17.5 L15,17 L15.5,22.5 L11,22.5Z" fill="#fff" opacity="0.2"/><path d="M14,15.5 L16.5,11.5 L19.5,12.5 L18.5,16.5Z" fill="#4a2030" opacity="0.5"/><use href="#L" fill="#4a2030" opacity="0.6"/><path d="M20.9,21.2 l2.3,-1.0 l1.1,2.0 l-2.3,1.0Z" fill="#4a2030" opacity="0.35"/><path d="M18.8,27.7 l3.1,-1.2 l1.6,2.4 l-3.1,1.2Z" fill="#ffffff" opacity="0.15"/><path d="M27.6,26.4 l3.0,-0.8 l1.5,1.5 l-3.0,0.8Z" fill="#4a2030" opacity="0.35"/><path d="M30.6,27.0 l3.0,-1.2 l1.5,2.3 l-3.0,1.2Z" fill="#ffffff" opacity="0.15"/></svg></div>
<div class="cell" style="left:419.8px;top:239.9px"><svg width="54" height="54" viewBox="0 0 54 54"><use href="#bC" fill="#954b80"/><use href="#bC" fill="url(#sh)"/><path d="M22,21 L25,17.5 L30,17.5 L37,22.5 L35,25 L24,24Z" fill="#954b80"/><path d="M22,21 L25,17.5 L30,17.5 L37,22.5 L35,25 L24,24Z" fill="#4a1a40" opacity="0.45"/><path d="M23,21 L33,21.5 Q36,22.5 37,25.5 L30,28.5 L24,26Z" fill="#4a1a40" opacity="0.3"/><path d="M9,20 L12,17.5 L15,17 L15.5,22.5 L11,22.5Z" fill="#fff" opacity="0.2"/><path d="M14,15.5 L16.5,11.5 L19.5,12.5 L18.5,16.5Z" fill="#4a1a40" opacity="0.5"/><use href="#L" fill="#4a1a40" opacity="0.6"/><path d="M28.2,21.5 l3.5,-0.9 l1.7,1.9 l-3.5,0.9Z" fill="#4a1a40" opacity="0.35"/><path d="M18.3,23.1 l3.5,-0.9 l1.7,1.8 l-3.5,0.9Z" fill="#ffffff" opacity="0.15"/><path d="M29.6,28.8 l3.0,-1.0 l1.5,2.1 l-3.0,1.0Z" fill="#4a1a40" opacity="0.35"/><path d="M25.1,26.5 l3.5,-1.2 l1.8,2.4 l-3.5,1.2Z" fill="#ffffff" opacity="0.15"/></svg></div>
<div class="cell" style="left:478.1px;top:239.9px"><svg width="54" height="54" viewBox="0 0 54 54"><use href="#bA" fill="#7b6093"/><use href="#bA" fill="url(#sh)"/><path d="M23,21 L33,21.5 Q36,22.5 37,25.5 L30,28.5 L24,26Z" fill="#3a2a50" opacity="0.3"/><path d="M9,20 L12,17.5 L15,17 L15.5,22.5 L11,22.5Z" fill="#fff" opacity="0.2"/><path d="M14,15.5 L16.5,11.5 L19.5,12.5 L18.5,16.5Z" fill="#3a2a50" opacity="0.5"/><use href="#L" fill="#3a2a50" opacity="0.6"/><path d="M27.9,21.6 l2.3,-0.9 l1.1,1.9 l-2.3,0.9Z" fill="#3a2a50" opacity="0.35"/><path d="M29.6,23.4 l3.1,-0.8 l1.6,1.5 l-3.1,0.8Z" fill="#ffffff" opacity="0.15"/><path d="M18.0,23.2 l3.3,-1.3 l1.7,2.5 l-3.3,1.3Z" fill="#3a2a50" opacity="0.35"/><path d="M28.5,23.3 l3.0,-1.1 l1.5,2.2 l-3.0,1.1Z" fill="#ffffff" opacity="0.15"/></svg></div>
<div class="cell" style="left:70.0px;top:298.2px"><svg width="54" height="54" viewBox="0 0 54 54"><use href="#bB2" fill="#888d72"/><use href="#bB2" fill="url(#sh)"/><path d="M23,21 L33,21.5 Q36,22.5 37,25.5 L30,28.5 L24,26Z" fill="#3a3a40" opacity="0.3"/><path d="M9,20 L12,17.5 L15,17 L15.5,22.5 L11,22.5Z" fill="#fff" opacity="0.2"/><path d="M14,15.5 L16.5,11.5 L19.5,12.5 L18.5,16.5Z" fill="#3a3a40" opacity="0.5"/><use href="#L" fill="#3a3a40" opacity="0.6"/><path d="M24.9,21.9 l3.8,-0.9 l1.9,1.8 l-3.8,0.9Z" fill="#3a3a40" opacity="0.35"/><path d="M33.6,28.5 l2.0,-1.1 l1.0,2.2 l-2.0,1.1Z" fill="#ffffff" opacity="0.15"/><path d="M30.9,28.7 l2.9,-1.0 l1.4,1.9 l-2.9,1.0Z" fill="#3a3a40" opacity="0.35"/><path d="M20.6,28.6 l2.4,-1.2 l1.2,2.4 l-2.4,1.2Z" fill="#ffffff" opacity="0.15"/></svg></div>
<div class="cell" style="left:128.3px;top:298.2px"><svg width="54" height="54" viewBox="0 0 54 54"><use href="#bA" fill="#80659a"/><use href="#bA" fill="url(#sh)"/><path d="M23,21 L33,21.5 Q36,22.5 37,25.5 L30,28.5 L24,26Z" fill="#3a2a50" opacity="0.3"/><path d="M9,20 L12,17.5 L15,17 L15.5,22.5 L11,22.5Z" fill="#fff" opacity="0.2"/><path d="M14,15.5 L16.5,11.5 L19.5,12.5 L18.5,16.5Z" fill="#3a2a50" opacity="0.5"/><use href="#L" fill="#3a2a50" opacity="0.6"/><path d="M19.4,25.2 l3.9,-0.8 l2.0,1.7 l-3.9,0.8Z" fill="#3a2a50" opacity="0.35"/><path d="M30.9,25.1 l3.8,-1.3 l1.9,2.6 l-3.8,1.3Z" fill="#ffffff" opacity="0.15"/><path d="M20.9,28.2 l3.0,-0.8 l1.5,1.5 l-3.0,0.8Z" fill="#3a2a50" opacity="0.35"/><path d="M17.1,24.9 l2.9,-1.0 l1.5,2.0 l-2.9,1.0Z" fill="#ffffff" opacity="0.15"/></svg></div>
<div class="cell" style="left:186.6px;top:298.2px"><svg width="54" height="54" viewBox="0 0 54 54"><use href="#bA" fill="#a74b58"/><use href="#bA" fill="url(#sh)"/><path d="M23,21 L33,21.5 Q36,22.5 37,25.5 L30,28.5 L24,26Z" fill="#4a1a30" opacity="0.3"/><path d="M9,20 L12,17.5 L15,17 L15.5,22.5 L11,22.5Z" fill="#fff" opacity="0.2"/><path d="M14,15.5 L16.5,11.5 L19.5,12.5 L18.5,16.5Z" fill="#4a1a30" opacity="0.5"/><use href="#L" fill="#4a1a30" opacity="0.6"/><path d="M19.4,23.8 l2.6,-1.4 l1.3,2.8 l-2.6,1.4Z" fill="#4a1a30" opacity="0.35"/><path d="M17.0,27.0 l3.7,-0.8 l1.8,1.7 l-3.7,0.8Z" fill="#ffffff" opacity="0.15"/><path d="M32.7,26.7 l3.8,-1.0 l1.9,1.9 l-3.8,1.0Z" fill="#4a1a30" opacity="0.35"/><path d="M23.3,24.1 l4.0,-1.2 l2.0,2.4 l-4.0,1.2Z" fill="#ffffff" opacity="0.15"/></svg></div>
<div class="cell" style="left:244.9px;top:298.2px"><svg width="54" height="54" viewBox="0 0 54 54"><use href="#bC" fill="#6d7b58"/><use href="#bC" fill="url(#sh)"/><path d="M22,21 L25,17.5 L30,17.5 L37,22.5 L35,25 L24,24Z" fill="#6d7b58"/><path d="M22,21 L25,17.5 L30,17.5 L37,22.5 L35,25 L24,24Z" fill="#2a2a2a" opacity="0.45"/><path d="M23,21 L33,21.5 Q36,22.5 37,25.5 L30,28.5 L24,26Z" fill="#2a2a2a" opacity="0.3"/><path d="M9,20 L12,17.5 L15,17 L15.5,22.5 L11,22.5Z" fill="#fff" opacity="0.2"/><path d="M14,15.5 L16.5,11.5 L19.5,12.5 L18.5,16.5Z" fill="#2a2a2a" opacity="0.5"/><use href="#L" fill="#2a2a2a" opacity="0.6"/><path d="M23.1,24.4 l2.6,-0.8 l1.3,1.6 l-2.6,0.8Z" fill="#2a2a2a" opacity="0.35"/><path d="M18.7,27.7 l2.6,-1.5 l1.3,2.9 l-2.6,1.5Z" fill="#ffffff" opacity="0.15"/><path d="M21.2,23.1 l3.0,-0.9 l1.5,1.8 l-3.0,0.9Z" fill="#2a2a2a" opacity="0.35"/><path d="M23.3,28.6 l3.8,-1.4 l1.9,2.7 l-3.8,1.4Z" fill="#ffffff" opacity="0.15"/><path d="M8,21 Q9,15 14,14 L16.5,11.5 L19.5,12.5 L19,18 L16,24 Q11,25 8,21Z" fill="#2a2a38" opacity="0.75"/></svg></div>
<div class="cell" style="left:303.2px;top:298.2px"><svg width="54" height="54" viewBox="0 0 54 54"><use href="#bA" fill="#6d5395"/><use href="#bA" fill="url(#sh)"/><path d="M23,21 L33,21.5 Q36,22.5 37,25.5 L30,28.5 L24,26Z" fill="#2a1a4a" opacity="0.3"/><path d="M9,20 L12,17.5 L15,17 L15.5,22.5 L11,22.5Z" fill="#fff" opacity="0.2"/><path d="M14,15.5 L16.5,11.5 L19.5,12.5 L18.5,16.5Z" fill="#2a1a4a" opacity="0.5"/><use href="#L" fill="#2a1a4a" opacity="0.6"/><path d="M27.7,28.3 l3.9,-1.2 l1.9,2.3 l-3.9,1.2Z" fill="#2a1a4a" opacity="0.35"/><path d="M29.2,21.4 l3.5,-1.1 l1.7,2.2 l-3.5,1.1Z" fill="#ffffff" opacity="0.15"/><path d="M29.8,26.2 l2.6,-0.8 l1.3,1.6 l-2.6,0.8Z" fill="#2a1a4a" opacity="0.35"/><path d="M32.8,22.0 l2.9,-1.0 l1.5,2.0 l-2.9,1.0Z" fill="#ffffff" opacity="0.15"/></svg></div>
<div class="cell" style="left:361.5px;top:298.2px"><svg width="54" height="54" viewBox="0 0 54 54"><use href="#bA" fill="#887b65"/><use href="#bA" fill="url(#sh)"/><path d="M23,21 L33,21.5 Q36,22.5 37,25.5 L30,28.5 L24,26Z" fill="#3a3040" opacity="0.3"/><path d="M9,20 L12,17.5 L15,17 L15.5,22.5 L11,22.5Z" fill="#fff" opacity="0.2"/><path d="M14,15.5 L16.5,11.5 L19.5,12.5 L18.5,16.5Z" fill="#3a3040" opacity="0.5"/><use href="#L" fill="#3a3040" opacity="0.6"/><path d="M22.1,26.9 l4.0,-0.9 l2.0,1.9 l-4.0,0.9Z" fill="#3a3040" opacity="0.35"/><path d="M28.2,23.4 l3.1,-1.0 l1.6,2.1 l-3.1,1.0Z" fill="#ffffff" opacity="0.15"/><path d="M19.8,22.3 l2.4,-1.4 l1.2,2.9 l-2.4,1.4Z" fill="#3a3040" opacity="0.35"/><path d="M25.5,22.8 l3.8,-1.5 l1.9,3.0 l-3.8,1.5Z" fill="#ffffff" opacity="0.15"/></svg></div>
<div class="cell" style="left:419.8px;top:298.2px"><svg width="54" height="54" viewBox="0 0 54 54"><use href="#bA" fill="#9a5858"/><use href="#bA" fill="url(#sh)"/><path d="M23,21 L33,21.5 Q36,22.5 37,25.5 L30,28.5 L24,26Z" fill="#4a2030" opacity="0.3"/><path d="M9,20 L12,17.5 L15,17 L15.5,22.5 L11,22.5Z" fill="#fff" opacity="0.2"/><path d="M14,15.5 L16.5,11.5 L19.5,12.5 L18.5,16.5Z" fill="#4a2030" opacity="0.5"/><use href="#L" fill="#4a2030" opacity="0.6"/><path d="M24.6,22.1 l2.4,-0.8 l1.2,1.6 l-2.4,0.8Z" fill="#4a2030" opacity="0.35"/><path d="M22.8,21.7 l2.5,-0.9 l1.2,1.9 l-2.5,0.9Z" fill="#ffffff" opacity="0.15"/><path d="M26.7,28.1 l3.5,-1.1 l1.7,2.1 l-3.5,1.1Z" fill="#4a2030" opacity="0.35"/><path d="M24.0,25.2 l2.8,-1.0 l1.4,2.0 l-2.8,1.0Z" fill="#ffffff" opacity="0.15"/></svg></div>
<div class="cell" style="left:478.1px;top:298.2px"><svg width="54" height="54" viewBox="0 0 54 54"><use href="#bA" fill="#808679"/><use href="#bA" fill="url(#sh)"/><path d="M23,21 L33,21.5 Q36,22.5 37,25.5 L30,28.5 L24,26Z" fill="#3a3a40" opacity="0.3"/><path d="M9,20 L12,17.5 L15,17 L15.5,22.5 L11,22.5Z" fill="#fff" opacity="0.2"/><path d="M14,15.5 L16.5,11.5 L19.5,12.5 L18.5,16.5Z" fill="#3a3a40" opacity="0.5"/><use href="#L" fill="#3a3a40" opacity="0.6"/><path d="M18.1,23.2 l3.9,-0.8 l2.0,1.7 l-3.9,0.8Z" fill="#3a3a40" opacity="0.35"/><path d="M25.6,26.0 l3.7,-0.9 l1.9,1.8 l-3.7,0.9Z" fill="#ffffff" opacity="0.15"/><path d="M21.6,23.0 l2.8,-1.1 l1.4,2.2 l-2.8,1.1Z" fill="#3a3a40" opacity="0.35"/><path d="M33.2,27.8 l3.7,-0.8 l1.9,1.5 l-3.7,0.8Z" fill="#ffffff" opacity="0.15"/></svg></div>
<div class="cell" style="left:70.0px;top:356.5px"><svg width="54" height="54" viewBox="0 0 54 54"><use href="#bA" fill="#6d589a"/><use href="#bA" fill="url(#sh)"/><path d="M23,21 L33,21.5 Q36,22.5 37,25.5 L30,28.5 L24,26Z" fill="#2a2050" opacity="0.3"/><path d="M9,20 L12,17.5 L15,17 L15.5,22.5 L11,22.5Z" fill="#fff" opacity="0.2"/><path d="M14,15.5 L16.5,11.5 L19.5,12.5 L18.5,16.5Z" fill="#2a2050" opacity="0.5"/><use href="#L" fill="#2a2050" opacity="0.6"/><path d="M17.5,26.7 l3.8,-1.1 l1.9,2.2 l-3.8,1.1Z" fill="#2a2050" opacity="0.35"/><path d="M27.0,21.0 l2.8,-1.4 l1.4,2.9 l-2.8,1.4Z" fill="#ffffff" opacity="0.15"/><path d="M31.0,27.8 l3.9,-0.9 l2.0,1.9 l-3.9,0.9Z" fill="#2a2050" opacity="0.35"/><path d="M18.9,22.2 l3.0,-1.3 l1.5,2.5 l-3.0,1.3Z" fill="#ffffff" opacity="0.15"/></svg></div>
<div class="cell" style="left:128.3px;top:356.5px"><svg width="54" height="54" viewBox="0 0 54 54"><use href="#bA" fill="#9a525f"/><use href="#bA" fill="url(#sh)"/><path d="M23,21 L33,21.5 Q36,22.5 37,25.5 L30,28.5 L24,26Z" fill="#4a2030" opacity="0.3"/><path d="M9,20 L12,17.5 L15,17 L15.5,22.5 L11,22.5Z" fill="#fff" opacity="0.2"/><path d="M14,15.5 L16.5,11.5 L19.5,12.5 L18.5,16.5Z" fill="#4a2030" opacity="0.5"/><use href="#L" fill="#4a2030" opacity="0.6"/><path d="M33.0,26.8 l3.3,-1.3 l1.6,2.6 l-3.3,1.3Z" fill="#4a2030" opacity="0.35"/><path d="M24.8,25.4 l2.1,-1.3 l1.0,2.7 l-2.1,1.3Z" fill="#ffffff" opacity="0.15"/><path d="M21.0,28.4 l3.3,-1.0 l1.6,2.0 l-3.3,1.0Z" fill="#4a2030" opacity="0.35"/><path d="M19.2,23.0 l3.3,-1.3 l1.6,2.5 l-3.3,1.3Z" fill="#ffffff" opacity="0.15"/></svg></div>
<div class="cell" style="left:186.6px;top:356.5px"><svg width="54" height="54" viewBox="0 0 54 54"><use href="#bB" fill="#a73e58"/><use href="#bB" fill="url(#sh)"/><path d="M22,21 L25,17.5 L30,17.5 L37,22.5 L35,25 L24,24Z" fill="#a73e58"/><path d="M22,21 L25,17.5 L30,17.5 L37,22.5 L35,25 L24,24Z" fill="#4a1a30" opacity="0.45"/><path d="M23,21 L33,21.5 Q36,22.5 37,25.5 L30,28.5 L24,26Z" fill="#4a1a30" opacity="0.3"/><path d="M9,20 L12,17.5 L15,17 L15.5,22.5 L11,22.5Z" fill="#fff" opacity="0.2"/><path d="M14,15.5 L16.5,11.5 L19.5,12.5 L18.5,16.5Z" fill="#4a1a30" opacity="0.5"/><use href="#L" fill="#4a1a30" opacity="0.6"/><path d="M18.9,21.6 l3.0,-1.2 l1.5,2.4 l-3.0,1.2Z" fill="#4a1a30" opacity="0.35"/><path d="M23.6,22.8 l3.2,-0.8 l1.6,1.5 l-3.2,0.8Z" fill="#ffffff" opacity="0.15"/><path d="M22.1,24.7 l3.9,-1.2 l2.0,2.5 l-3.9,1.2Z" fill="#4a1a30" opacity="0.35"/><path d="M32.0,24.8 l2.5,-0.9 l1.2,1.9 l-2.5,0.9Z" fill="#ffffff" opacity="0.15"/></svg></div>
<div class="cell" style="left:244.9px;top:356.5px"><svg width="54" height="54" viewBox="0 0 54 54"><use href="#bB2" fill="#9a8d65"/><use href="#bB2" fill="url(#sh)"/><path d="M23,21 L33,21.5 Q36,22.5 37,25.5 L30,28.5 L24,26Z" fill="#4a3a30" opacity="0.3"/><path d="M9,20 L12,17.5 L15,17 L15.5,22.5 L11,22.5Z" fill="#fff" opacity="0.2"/><path d="M14,15.5 L16.5,11.5 L19.5,12.5 L18.5,16.5Z" fill="#4a3a30" opacity="0.5"/><use href="#L" fill="#4a3a30" opacity="0.6"/><path d="M33.3,26.6 l2.6,-0.8 l1.3,1.5 l-2.6,0.8Z" fill="#4a3a30" opacity="0.35"/><path d="M25.5,26.4 l2.8,-0.9 l1.4,1.9 l-2.8,0.9Z" fill="#ffffff" opacity="0.15"/><path d="M28.3,28.4 l2.5,-0.8 l1.2,1.6 l-2.5,0.8Z" fill="#4a3a30" opacity="0.35"/><path d="M22.7,24.4 l3.4,-0.9 l1.7,1.8 l-3.4,0.9Z" fill="#ffffff" opacity="0.15"/></svg></div>
<div class="cell" style="left:303.2px;top:356.5px"><svg width="54" height="54" viewBox="0 0 54 54"><use href="#bC" fill="#9a805f"/><use href="#bC" fill="url(#sh)"/><path d="M22,21 L25,17.5 L30,17.5 L37,22.5 L35,25 L24,24Z" fill="#9a805f"/><path d="M22,21 L25,17.5 L30,17.5 L37,22.5 L35,25 L24,24Z" fill="#4a3030" opacity="0.45"/><path d="M23,21 L33,21.5 Q36,22.5 37,25.5 L30,28.5 L24,26Z" fill="#4a3030" opacity="0.3"/><path d="M9,20 L12,17.5 L15,17 L15.5,22.5 L11,22.5Z" fill="#fff" opacity="0.2"/><path d="M14,15.5 L16.5,11.5 L19.5,12.5 L18.5,16.5Z" fill="#4a3030" opacity="0.5"/><use href="#L" fill="#4a3030" opacity="0.6"/><path d="M30.6,26.9 l3.0,-0.9 l1.5,1.8 l-3.0,0.9Z" fill="#4a3030" opacity="0.35"/><path d="M33.5,23.5 l3.6,-0.9 l1.8,1.8 l-3.6,0.9Z" fill="#ffffff" opacity="0.15"/><path d="M20.8,27.1 l2.6,-1.5 l1.3,2.9 l-2.6,1.5Z" fill="#4a3030" opacity="0.35"/><path d="M25.4,22.5 l2.4,-1.1 l1.2,2.1 l-2.4,1.1Z" fill="#ffffff" opacity="0.15"/></svg></div>
<div class="a" style="left:308px;top:423px;width:184px;height:24px;border-radius:3px;background:linear-gradient(#323232,#141414);box-shadow:0 0 1px #111"></div>
<svg class="a" style="left:0;top:0" width="800" height="500">
<rect x="327" y="439" width="143" height="1.2" fill="#101010"/>
<g fill="#d8d8d8">
<rect x="312.5" y="429.8" width="2" height="2.6"/><path d="M313.5,431 L317.5,428 L317.5,434Z"/>
<rect x="320" y="430.6" width="17" height="0.8" fill="#2a2a2a"/><circle cx="338.5" cy="431" r="2.2" fill="#8a8a8a"/>
<rect x="342.5" y="429.8" width="2" height="2.6"/><path d="M343.5,431 L347,428.2 L347,433.8Z"/><path d="M348.3,428.5 Q350.5,431 348.3,433.5" stroke="#d8d8d8" stroke-width="1.1" fill="none"/>
<path d="M376,431 L381.5,427 L381.5,435Z M381.5,431 L387,427 L387,435Z"/>
<path d="M399,427 L408.5,432 L399,437Z"/>
<path d="M416,428 L421.5,431.5 L416,435Z M421.5,428 L427.5,431.5 L421.5,435Z"/>
<circle cx="419" cy="441" r="1.5" fill="#a0a0a0"/>
<rect x="463" y="430.6" width="7.5" height="2.6"/><path d="M465.5,429.8 L466.75,428.3 L468,429.8Z M465.5,434 L466.75,435.5 L468,434Z"/>
<path d="M478.5,430 h3 v1 h-2 v3.2 h5 v-1.5 h1 v2.5 h-7Z"/><path d="M480.5,433 Q481,430.5 484,430" stroke="#d8d8d8" stroke-width="1" fill="none"/><path d="M483.5,428.5 L486,430 L483.5,431.5Z"/>
</g>
<text x="312" y="443.5" font-size="4.5" fill="#ccc" font-family="Liberation Sans" letter-spacing="0.2">04:55</text>
<text x="473" y="443.5" font-size="4.5" fill="#ccc" font-family="Liberation Sans">-02:46</text>
</svg>
<div class="a" style="left:575px;top:46px;width:223px;height:411px;background:#575757"></div>
<div class="tb" style="left:575px;top:37px;width:223px;background:linear-gradient(#2c7a3c,#1c5e2a);border-top-color:#3a8a48;color:#e0ece0">Model View&nbsp; [Model Info]</div>
<div class="a" style="left:782px;top:40px;width:4px;height:4px;background:#c8d8b0"></div>
<div class="a" style="left:791px;top:40px;width:4px;height:4px;background:#5a2a20"></div>
<div class="a" style="left:792px;top:46px;width:5px;height:411px;background:linear-gradient(90deg,#585858,#5e5e5e)"></div><div class="a" style="left:797px;top:46px;width:3px;height:411px;background:#3a3a3a"></div>
<div class="a" style="left:577px;top:53.5px;width:215px;height:215px;background:#fffee4;border:1px solid #d8c860;border-left:2px solid #e8d870;border-bottom:1.5px solid #9a8a40"></div>
<svg class="a" style="left:0;top:0" width="800" height="500">
<defs>
<linearGradient id="lg" x1="0" y1="0" x2="0" y2="1"><stop offset="0" stop-color="#7a80a0"/><stop offset="0.5" stop-color="#4a4a78"/><stop offset="1" stop-color="#2a2a58"/></linearGradient>
<linearGradient id="wg" x1="0" y1="0" x2="1" y2="1"><stop offset="0" stop-color="#2a3048"/><stop offset="1" stop-color="#4a6a70"/></linearGradient>
<linearGradient id="fg" x1="0" y1="0" x2="1" y2="0.3"><stop offset="0" stop-color="#8a9ca6"/><stop offset="1" stop-color="#b4bcbc"/></linearGradient>
<linearGradient id="ng" x1="0" y1="0" x2="0" y2="1"><stop offset="0" stop-color="#8a9aa8"/><stop offset="1" stop-color="#8a7e96"/></linearGradient>
</defs>
<path d="M641,168 L655,165 L649,184 L652,196 L657,199 L650,201 L645,198 L642,186 Z" fill="url(#lg)"/>
<path d="M658,163 L665,164 L665,183 L669,187 L663,189 L660,185 Z" fill="url(#lg)"/>
<path d="M689,170 L702,172 L701,207 L707,217 L713,220 L705,222 L698,212 L694,194 Z" fill="url(#lg)"/>
<path d="M702,170 L711,169 L710,202 L716,207 L710,210 L705,204 Z" fill="url(#lg)"/>
<g fill="#b04050"><path d="M649,198 L657,199 L654,201Z"/><path d="M663,186 L669,187 L666,189Z"/><path d="M704,218 L713,220 L708,222Z"/><path d="M709,206 L716,207 L712,210Z"/></g>
<path d="M636,153 L646,146 Q650,138 662,132 L683,136 Q700,128 706,118 Q714,108 724,104 L721,95 L733,102 Q745,98 756,104 Q770,106 776,110 Q780,116 774,121 Q770,127 756,128 L750,132 Q740,138 730,144 Q718,156 712,170 Q700,176 690,174 Q676,168 662,160 L654,166 Q645,170 641,168 Q640,160 642,155 Z" fill="url(#ng)"/>
<path d="M642,155 L646,146 Q650,138 662,132 L683,136 L698,130 L704,150 L712,168 Q700,176 690,174 Q676,168 662,160 L654,166 Q645,170 641,168 Q640,160 642,155Z" fill="#807e9c"/>
<g stroke="#c48a5c" stroke-width="3.2" opacity="0.78" fill="none" stroke-linecap="round">
<path d="M652,140 L650,160"/><path d="M660,135 L658,158"/><path d="M668,134 L669,158"/><path d="M676,135 L680,162"/><path d="M686,134 L690,166"/><path d="M696,140 L700,170"/><path d="M704,150 L708,166"/></g>
<path d="M700,120 Q714,108 724,104 L733,102 Q745,98 756,104 L740,140 Q726,150 716,166 L706,150 Z" fill="#8a9aa6" opacity="0.9"/>
<path d="M730,104 Q746,98 758,104 Q770,106 776,110 Q780,116 774,121 Q770,127 756,128 L750,132 Q740,138 730,144 Q724,124 730,104Z" fill="url(#fg)"/>
<ellipse cx="775.5" cy="114.5" rx="3" ry="4.5" fill="#4a4858"/>
<path d="M750,128.5 Q762,127 772,123 L770,126 Q760,131 752,131Z" fill="#302838"/>
<ellipse cx="749" cy="108" rx="1.6" ry="1.1" fill="#2a2a3a"/>
<path d="M729,101 Q740,84 756,89 Q766,93 771,102 Q760,99 752,97 Q742,96 735,106Z" fill="#7e7690"/>
<g stroke="#4a4258" stroke-width="1.1" fill="none"><path d="M741,89 L741,98"/><path d="M748,88 L748,97"/><path d="M755,90 L754,98"/><path d="M762,93 L760,99"/><path d="M734,95 L738,101"/></g>
<path d="M735,100 Q740,95 746,97 L738,104Z" fill="#c05a5a"/>
<path d="M721,95 L734,101 L729,110 L724,105Z" fill="#9a8a9a"/>
<path d="M662,128 Q678,116 700,113 Q704,120 702,127 Q696,129 692,133 Q686,134 682,136 Q676,134 672,135 Q668,133 662,128Z" fill="url(#wg)"/>
<path d="M690,172 Q676,168 662,160 L655,164 Q668,172 690,176Z" fill="#6a5a78" opacity="0.6"/>
<path d="M716,164 Q722,150 732,142 L728,150 Q720,160 714,170Z" fill="#7a6a88" opacity="0.5"/><g fill="#c48a5c" opacity="0.55"><path d="M704,152 L712,150 L713,156 L706,158Z"/><path d="M706,162 L714,160 L713,166 L708,168Z"/></g>
</g>
<path d="M732,164 L732,171 L734,169 L736,172 L737,171 L735,168 L738,168Z" fill="#eee" stroke="#666" stroke-width="0.6"/>
</svg>
<div class="t" style="left:581px;top:271px;font-size:4.9px;color:#f6f6f6">MODELS/PLANETS/CREATURES/ANTELOPERIG/ANTELOPE.SCENE.MBIN</div>
<div class="btn" style="left:577px;top:280px;width:149px;height:9px;font-size:5.5px;line-height:7px">View Variants</div>
<div class="a" style="left:579px;top:297px;width:211px;height:1px;background:#7a7a7a"></div>
<div class="t" style="left:580px;top:301px;font-size:5.2px">&#9660; cTkAnimPoseComponentData</div>
<div class="t" style="left:580px;top:310px;font-size:5.2px">&#9658; cTkAnimationComponentData</div>
<div class="ab" style="top:319px">IDLE</div>
<div class="t" style="left:584px;top:331px">FRAME 445</div>
<div class="t" style="left:584px;top:340px">SPEED</div>
<div class="a" style="will-change:transform;left:664px;top:340px;width:127px;height:7px;background:#363636;color:#eee;font-size:5.5px;line-height:7px;padding-left:3px">&#9664;&nbsp;&nbsp;&nbsp;1.00000<span style="position:absolute;right:2px">&#9654;</span></div>
<div class="a" style="left:794px;top:321px;width:3.5px;height:136px;background:#0e0e0e"></div>
<div class="ab" style="top:349.5px">SKID</div>
<div class="ab" style="top:361.5px">RIGHT</div>
<div class="ab" style="top:373.5px">LEFT</div>
<div class="ab" style="top:385.5px">EARS</div>
<div class="ab" style="top:397.5px">EAT</div>
<div class="ab" style="top:409.5px">LOOKLEFT</div>
<div class="ab" style="top:421.5px">LOOKRIGHT</div>
<div class="ab" style="top:433.5px">WALK</div>
<div class="ab" style="top:445.5px">RUN</div>
<div class="a" style="left:575px;top:456px;width:223px;height:1px;background:#1e1e1e"></div>
<div class="a" style="left:557px;top:453px;width:2px;height:2px;background:#bbb"></div><div class="a" style="left:236px;top:472px;width:2px;height:2px;background:#bbb"></div><div class="a" style="left:795px;top:455px;width:2px;height:2px;background:#999"></div>
</body></html>
